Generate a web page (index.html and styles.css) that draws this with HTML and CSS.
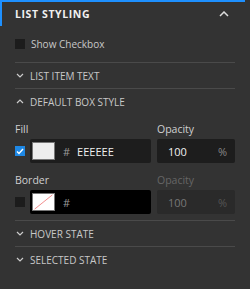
FILE: index.html
```html
<!DOCTYPE html>
<html>
<head>
    <meta charset="UTF-8">
    <title>List Styling</title>
    <link rel="stylesheet" href="styles.css">
</head>
<body>
    <div class="panel">
        <div class="panel-head">
            <span class="panel-title">LIST STYLING</span>
            <svg class="chev" width="10" height="6" viewBox="0 0 10 6"><path d="M1 5 L5 1 L9 5" fill="none" stroke="#ddd" stroke-width="1.5"/></svg>
        </div>

        <div class="panel-body">
            <label class="check-row">
                <span class="box"></span>
                <span>Show Checkbox</span>
            </label>

            <div class="section">
                <svg class="chev-s" width="8" height="5" viewBox="0 0 8 5"><path d="M1 1 L4 4 L7 1" fill="none" stroke="#ccc" stroke-width="1.2"/></svg>
                <span>LIST ITEM TEXT</span>
            </div>

            <div class="section open">
                <svg class="chev-s" width="8" height="5" viewBox="0 0 8 5"><path d="M1 4 L4 1 L7 4" fill="none" stroke="#ccc" stroke-width="1.2"/></svg>
                <span>DEFAULT BOX STYLE</span>
            </div>

            <div class="field-row">
                <div class="col-main">
                    <div class="label">Fill</div>
                    <div class="input-line">
                        <span class="box checked">
                            <svg width="8" height="7" viewBox="0 0 8 7"><path d="M1 3.5 L3 5.5 L7 1" fill="none" stroke="#fff" stroke-width="1.4"/></svg>
                        </span>
                        <div class="color-input">
                            <span class="swatch"></span>
                            <span class="hash">#</span>
                            <span class="hex">EEEEEE</span>
                        </div>
                    </div>
                </div>
                <div class="col-op">
                    <div class="label">Opacity</div>
                    <div class="op-input">
                        <span>100</span>
                        <span class="pct">%</span>
                    </div>
                </div>
            </div>

            <div class="field-row">
                <div class="col-main">
                    <div class="label">Border</div>
                    <div class="input-line">
                        <span class="box"></span>
                        <div class="color-input black">
                            <span class="swatch none">
                                <svg width="22" height="18" viewBox="0 0 22 18"><path d="M1 17 L21 1" stroke="#f08080" stroke-width="1"/></svg>
                            </span>
                            <span class="hash">#</span>
                            <span class="hex"></span>
                        </div>
                    </div>
                </div>
                <div class="col-op disabled">
                    <div class="label">Opacity</div>
                    <div class="op-input">
                        <span>100</span>
                        <span class="pct">%</span>
                    </div>
                </div>
            </div>

            <div class="section top-line">
                <svg class="chev-s" width="8" height="5" viewBox="0 0 8 5"><path d="M1 1 L4 4 L7 1" fill="none" stroke="#ccc" stroke-width="1.2"/></svg>
                <span>HOVER STATE</span>
            </div>

            <div class="section">
                <svg class="chev-s" width="8" height="5" viewBox="0 0 8 5"><path d="M1 1 L4 4 L7 1" fill="none" stroke="#ccc" stroke-width="1.2"/></svg>
                <span>SELECTED STATE</span>
            </div>
        </div>
    </div>
</body>
</html>
```

FILE: styles.css
```css
html, body {
    margin: 0;
    padding: 0;
    background-color: #333333;
}

body {
    width: 250px;
    height: 289px;
    overflow: hidden;
    font-family: "Open Sans", "Liberation Sans", sans-serif;
    font-size: 10px;
    color: #cccccc;
}

.panel {
    width: 245px;
    border-top: 2px solid #1e90ff;
}

.panel-head {
    display: flex;
    justify-content: space-between;
    align-items: center;
    height: 24px;
    padding: 0 16px 0 13px;
    border-left: 2px solid #1e90ff;
}

.panel-title {
    font-weight: bold;
    font-size: 10.5px;
    letter-spacing: 0.6px;
    color: #f0f0f0;
}

.panel-body {
    padding: 0 10px 0 15px;
}

.check-row {
    display: flex;
    align-items: center;
    height: 36px;
    gap: 6px;
    color: #c8c8c8;
}

.box {
    width: 10px;
    height: 10px;
    background-color: #1c1c1c;
    display: inline-flex;
    align-items: center;
    justify-content: center;
    flex: none;
}

.box.checked {
    background-color: #1e88e5;
}

.section {
    display: flex;
    align-items: center;
    gap: 6px;
    height: 25px;
    border-top: 1px solid #4a4a4a;
    color: #c8c8c8;
}

.chev-s {
    margin-left: 1px;
}

.field-row {
    display: flex;
    gap: 6px;
}

.field-row + .field-row {
    margin-top: 2px;
}

.col-main {
    width: 136px;
}

.col-op {
    width: 78px;
}

.label {
    height: 16px;
    line-height: 16px;
    margin-top: 7px;
    margin-bottom: 2px;
    color: #d0d0d0;
    font-size: 10.5px;
}

.input-line {
    display: flex;
    align-items: center;
    gap: 5px;
}

.color-input {
    display: flex;
    align-items: center;
    width: 121px;
    height: 24px;
    box-sizing: border-box;
    padding: 0 2px;
    background-color: #1d1d1d;
    border-radius: 2px;
}

.color-input.black {
    background-color: #000000;
}

.swatch {
    width: 23px;
    height: 18px;
    background-color: #eeeeee;
    border: 1px solid #777;
    box-sizing: border-box;
    display: flex;
    flex: none;
}

.swatch.none {
    background-color: #ffffff;
}

.swatch svg {
    width: 100%;
    height: 100%;
}

.hash {
    margin-left: 8px;
    color: #9a9a9a;
    font-size: 11px;
}

.hex {
    margin-left: 7px;
    color: #f0f0f0;
    font-size: 11px;
}

.op-input {
    display: flex;
    justify-content: space-between;
    align-items: center;
    height: 24px;
    padding: 0 8px 0 11px;
    background-color: #1d1d1d;
    border-radius: 2px;
    color: #f0f0f0;
    font-size: 11px;
}

.op-input .pct {
    color: #888;
}

.disabled .label {
    color: #666;
}

.disabled .op-input {
    background-color: #2a2a2a;
    color: #777;
}

.disabled .op-input .pct {
    color: #555;
}

.top-line {
    margin-top: 6px;
}
```
